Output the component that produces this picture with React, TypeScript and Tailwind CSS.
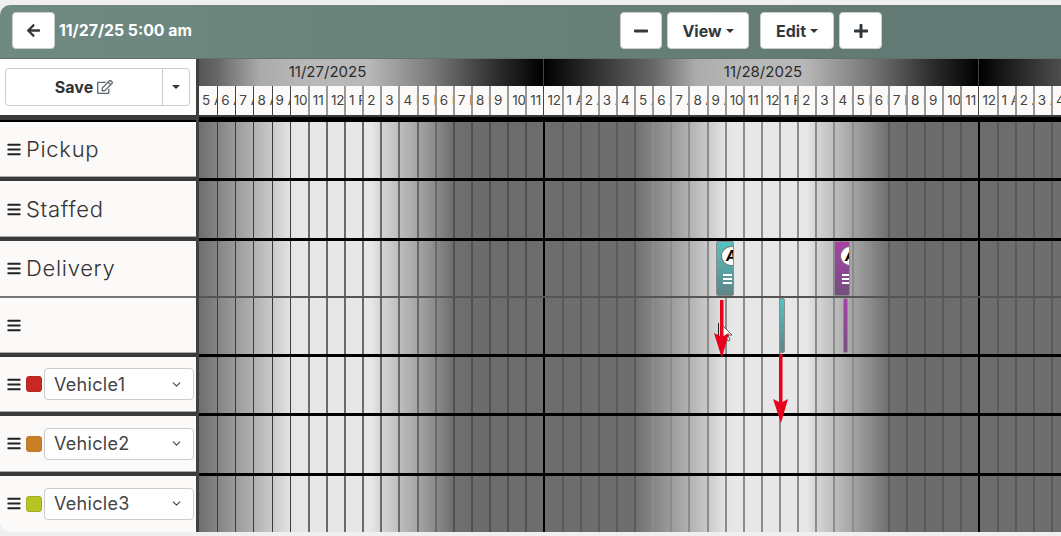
import React from "react";
import { FaArrowLeft, FaBars, FaMinus, FaPlus, FaRegEdit } from "react-icons/fa";
import { ChevronDown } from "lucide-react";

const trackBg =
  "bg-[linear-gradient(90deg,#6e6e6e_0%,#848484_4.17%,#9a9a9a_8.33%,#b0b0b0_12.5%,#c8c8c8_16.67%,#e2e2e2_20.83%,#e7e7e7_22.9%,#e7e7e7_39.6%,#d6d6d6_41.67%,#bfbfbf_45.83%,#a6a6a6_50%,#8c8c8c_54.17%,#707070_58.33%,#6c6c6c_62.5%,#6e6e6e_100%)] bg-[length:435px_100%]";

const dayBg =
  "bg-[linear-gradient(90deg,#000_0%,#2a2a2a_10%,#666_25%,#ababab_35%,#b8b8b8_45%,#b8b8b8_60%,#777_75%,#2a2a2a_90%,#000_100%)]";

const hours = Array.from({ length: 48 }, (_, i) => {
  const hour = (5 + i) % 24;
  return `${hour % 12 || 12} ${hour < 12 ? "AM" : "PM"}`;
});

function lineClass(i: number) {
  if (i === 0) return "";
  if (i === 19 || i === 43) return "border-l-2 border-black";
  if (i < 6) return "border-l border-[#3a3a3a]";
  if (i < 14) return "border-l-2 border-[#6a6a6a]";
  if (i < 19) return "border-l-2 border-[#505050]";
  if (i < 25) return "border-l-2 border-[#5a5a5a]";
  if (i < 38) return "border-l-2 border-[#8c8c8c]";
  return "border-l-2 border-[#5a5a5a]";
}

function stripLineClass(i: number) {
  if (i === 0) return "";
  if (i === 19 || i === 43) return "border-l border-[#444]";
  if (i < 6) return "border-l border-[#444]";
  return "border-l-2 border-[#999]";
}

type RowData = {
  label?: string;
  swatch?: string;
  rowClass: string;
  leftClass: string;
  trackClass: string;
};

const heavyLeft = "border-b-4 border-[#3a3a3a] shadow-[inset_0_-1px_0_#aaa]";
const heavyTrack = "border-b-[3px] border-black";

const rows: RowData[] = [
  { label: "Pickup", rowClass: "h-[59px]", leftClass: heavyLeft, trackClass: heavyTrack },
  { label: "Staffed", rowClass: "h-[60px]", leftClass: heavyLeft, trackClass: heavyTrack },
  { label: "Delivery", rowClass: "h-[57px]", leftClass: "border-b-2 border-[#777]", trackClass: "border-b-2 border-[#555]" },
  { rowClass: "h-[59px]", leftClass: heavyLeft, trackClass: heavyTrack },
  { label: "Vehicle1", swatch: "bg-[#c8281f] border-[#b02a22]", rowClass: "h-[59px]", leftClass: heavyLeft, trackClass: heavyTrack },
  { label: "Vehicle2", swatch: "bg-[#c98024] border-[#b57a30]", rowClass: "h-[60px]", leftClass: heavyLeft, trackClass: heavyTrack },
  { label: "Vehicle3", swatch: "bg-[#b8c41f] border-[#a3ad2a]", rowClass: "h-[56px]", leftClass: "", trackClass: "" },
];

function HeaderButton({ className, children }: { className: string; children: React.ReactNode }) {
  return (
    <button className={`h-[37px] flex items-center justify-center bg-white border border-[#ccc] rounded-[4px] text-[#33383c] text-[16px] font-bold ${className}`}>
      {children}
    </button>
  );
}

function Caret({ className = "ml-[4px]" }: { className?: string }) {
  return <span className={`inline-block w-0 h-0 border-x-[4px] border-x-transparent border-t-[4px] border-t-[#333] ${className}`} />;
}

function EventBar({ className, circle }: { className: string; circle?: string }) {
  return (
    <div className={`absolute overflow-hidden rounded-[2px] border border-[#8b8b8b] ${className}`}>
      {circle && (
        <>
          <div className={`absolute top-[5px] flex h-[18px] w-[18px] items-center rounded-full bg-white pl-[4px] text-[14px] leading-none font-bold italic text-black shadow-[0_0_0_1px_#777] ${circle}`}>
            A
          </div>
          <div className={`absolute top-[32px] flex flex-col gap-[2px] ${circle}`}>
            <span className="block h-[2px] w-[9px] ml-[1px] bg-white" />
            <span className="block h-[2px] w-[9px] ml-[1px] bg-white" />
            <span className="block h-[2px] w-[9px] ml-[1px] bg-white" />
          </div>
        </>
      )}
    </div>
  );
}

function Track({ className }: { className: string }) {
  return (
    <div className={`flex-1 flex overflow-hidden ${trackBg} ${className}`}>
      {hours.map((h, i) => (
        <div key={h + i} className={`w-[18.125px] shrink-0 ${lineClass(i)}`} />
      ))}
    </div>
  );
}

function RowLabel({ row }: { row: RowData }) {
  if (row.swatch) {
    return (
      <div className="flex h-full items-center pl-[7px] pb-[1px]">
        <FaBars className="w-[14px] h-[15px] text-[#222] shrink-0" />
        <span className={`ml-[5px] h-[16px] w-[16px] shrink-0 rounded-[3px] border ${row.swatch}`} />
        <div className="ml-[2px] flex h-[32px] w-[150px] items-center justify-between rounded-[4px] border border-[#ccc] bg-white pl-[9px] pr-[10px] text-[18px] text-[#444] tracking-[0.3px]">
          {row.label}
          <ChevronDown className="w-[13px] h-[13px] text-[#444]" />
        </div>
      </div>
    );
  }
  return (
    <div className="flex h-full items-center pl-[7px]">
      <FaBars className="w-[14px] h-[15px] text-[#222] shrink-0" />
      <span className="ml-[5px] text-[22px] font-light text-[#333] tracking-[0.7px]">{row.label}</span>
    </div>
  );
}

export default function App() {
  return (
    <div className="h-[536px] w-[1061px] overflow-hidden bg-[#efefef] pt-[5px] font-['Inter','Liberation_Sans',sans-serif]">
      <div className="w-[1090px] h-[527px] rounded-[10px] overflow-hidden">
        {/* top bar */}
        <div className="flex h-[54px] items-start pt-[7px] pl-[12px] border-b border-[#5d736d] bg-[linear-gradient(90deg,#6f8a82,#627a73_80%)]">
          <HeaderButton className="w-[43px]">
            <FaArrowLeft className="w-[15px] h-[15px]" />
          </HeaderButton>
          <div className="ml-[4px] w-[561px] h-[37px] flex items-center text-[15.8px] font-bold text-white whitespace-nowrap">
            11/27/25 5:00 am
          </div>
          <HeaderButton className="w-[42px]">
            <FaMinus className="w-[16px] h-[16px]" />
          </HeaderButton>
          <HeaderButton className="ml-[5px] w-[82px]">
            View
            <Caret />
          </HeaderButton>
          <HeaderButton className="ml-[11px] w-[74px]">
            Edit
            <Caret />
          </HeaderButton>
          <HeaderButton className="ml-[5px] w-[43px]">
            <FaPlus className="w-[16px] h-[16px]" />
          </HeaderButton>
        </div>

        {/* time header */}
        <div className="flex h-[63px]">
          <div className="w-[196px] shrink-0 flex flex-col bg-white">
            <div className="h-[56px] flex items-center pl-[5px]">
              <div className="flex h-[38px] w-[185px] rounded-[4px] border border-[#ccc] bg-white text-[#333]">
                <button className="flex flex-1 items-center justify-center gap-[4px] text-[16px] font-bold">
                  Save
                  <FaRegEdit className="w-[16px] h-[16px] text-[#5a6a70]" />
                </button>
                <button className="flex w-[27px] items-center justify-center border-l border-[#ccc]">
                  <Caret className="" />
                </button>
              </div>
            </div>
            <div className="h-[5px] bg-[#3a3a3a]" />
            <div className="h-[2px] bg-black" />
          </div>
          <div className="w-[3px] shrink-0 bg-[#3f3f3f]" />
          <div className="flex-1 flex flex-col overflow-hidden">
            <div className="h-[27px] flex shrink-0 text-[15px] text-[#2c2c2c]">
              <div className={`ml-[-91px] w-[435px] shrink-0 pl-[4px] text-center leading-[26px] ${dayBg}`}>11/27/2025</div>
              <div className={`w-[435px] shrink-0 pl-[4px] text-center leading-[26px] border-l border-[#444] ${dayBg}`}>11/28/2025</div>
              <div className={`w-[435px] shrink-0 border-l border-[#444] ${dayBg}`} />
            </div>
            <div className="h-[29px] flex shrink-0 bg-[#fbfaf8]">
              {hours.map((h, i) => (
                <div
                  key={h + i}
                  className={`w-[18.125px] shrink-0 overflow-hidden whitespace-nowrap pl-[3px] text-[13.5px] leading-[29px] text-[#444] ${stripLineClass(i)}`}
                >
                  {h}
                </div>
              ))}
            </div>
            <div className="h-[2px] shrink-0 bg-[#3a3a3a]" />
            <div className="h-[5px] shrink-0 bg-black" />
          </div>
        </div>

        {/* rows */}
        <div className="relative">
          {rows.map((row, i) => (
            <div key={i} className={`flex ${row.rowClass}`}>
              <div className={`w-[196px] shrink-0 bg-[#fbfaf8] ${row.leftClass}`}>
                <RowLabel row={row} />
              </div>
              <div className="w-[3px] shrink-0 bg-[#3f3f3f]" />
              <Track className={row.trackClass} />
            </div>
          ))}

          <EventBar className="left-[716px] top-[119px] h-[55px] w-[18px] bg-[linear-gradient(180deg,#55c2c0,#5f8588)]" circle="left-[5px]" />
          <EventBar className="left-[834px] top-[119px] h-[55px] w-[16px] bg-[linear-gradient(180deg,#ab3fab,#744f7c)]" circle="left-[6px]" />
          <EventBar className="left-[779px] top-[176px] h-[55px] w-[6px] bg-[linear-gradient(180deg,#55c2c0,#5f8588)]" />
          <EventBar className="left-[843px] top-[176px] h-[55px] w-[5px] bg-[linear-gradient(180deg,#ab3fab,#744f7c)]" />

          {/* cursor + annotation arrows */}
          <svg className="absolute left-[700px] top-[170px]" width="100" height="140" viewBox="0 0 100 140">
            <rect x="18" y="31" width="1" height="18" fill="#222" />
            <path d="M22 33 L22 47 L25 44 L28 49 L30 48 L28 43 L32 43 Z" fill="#fff" stroke="#333" strokeWidth="0.8" />
            <path d="M20 8 H23.5 V44 L29 41 L21.8 66 L14 41 L20 44 Z" fill="#e8001c" />
            <path d="M79 62 H82.5 V110 L88 107 L81 131 L73 107 L79 110 Z" fill="#e8001c" />
          </svg>
        </div>
      </div>
    </div>
  );
}
